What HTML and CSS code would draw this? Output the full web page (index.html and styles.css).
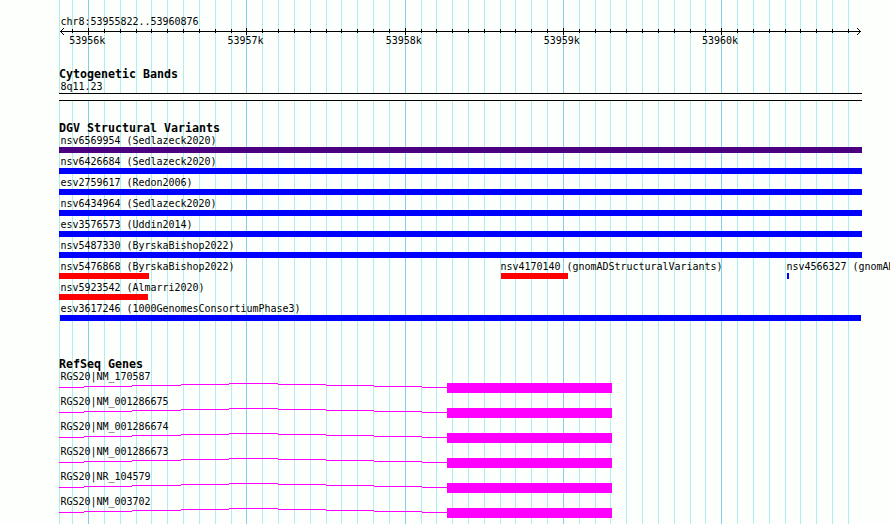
FILE: index.html
```html
<!DOCTYPE html>
<html lang="en">
<head>
    <meta charset="UTF-8">
    <title>chr8:53955822..53960876</title>
    <link rel="stylesheet" href="styles.css">
</head>
<body>
    <svg class="gridlines" id="gridlines" width="890" height="524" shape-rendering="crispEdges"></svg>

    <main class="panel">
        <section class="ruler">
            <p class="label">chr8:53955822..53960876</p>
            <svg class="axis" id="axis" width="803" height="7" shape-rendering="crispEdges">
                <rect x="1" y="3" width="801" height="1"/>
                <path d="M2 2h1v1h-1zM3 1h1v1h-1zM4 0h1v1h-1zM2 4h1v1h-1zM3 5h1v1h-1zM4 6h1v1h-1z"/>
                <path d="M800 2h1v1h-1zM799 1h1v1h-1zM798 0h1v1h-1zM800 4h1v1h-1zM799 5h1v1h-1zM798 6h1v1h-1z"/>
            </svg>
            <div class="scale">
                <span>53956k</span>
                <span>53957k</span>
                <span>53958k</span>
                <span>53959k</span>
                <span>53960k</span>
            </div>
        </section>

        <section class="track cytobands">
            <h2>Cytogenetic Bands</h2>
            <p class="label">8q11.23</p>
            <div class="band"></div>
        </section>

        <section class="track variants">
            <h2>DGV Structural Variants</h2>
            <div class="row"><div class="feature"><p class="label">nsv6569954 (Sedlazeck2020)</p><div class="bar complex"></div></div></div>
            <div class="row"><div class="feature"><p class="label">nsv6426684 (Sedlazeck2020)</p><div class="bar gain"></div></div></div>
            <div class="row"><div class="feature"><p class="label">esv2759617 (Redon2006)</p><div class="bar gain"></div></div></div>
            <div class="row"><div class="feature"><p class="label">nsv6434964 (Sedlazeck2020)</p><div class="bar gain"></div></div></div>
            <div class="row"><div class="feature"><p class="label">esv3576573 (Uddin2014)</p><div class="bar gain"></div></div></div>
            <div class="row"><div class="feature"><p class="label">nsv5487330 (ByrskaBishop2022)</p><div class="bar gain"></div></div></div>
            <div class="row shared">
                <div class="feature"><p class="label">nsv5476868 (ByrskaBishop2022)</p><div class="bar loss" style="width: 90px"></div></div>
                <div class="feature inner"><p class="label">nsv4170140 (gnomADStructuralVariants)</p><div class="bar loss" style="width: 67px"></div></div>
                <div class="feature inner"><p class="label">nsv4566327 (gnomADStructuralVariants)</p><div class="bar gain" style="width: 2px"></div></div>
            </div>
            <div class="row"><div class="feature"><p class="label">nsv5923542 (Almarri2020)</p><div class="bar loss" style="width: 89px"></div></div></div>
            <div class="row"><div class="feature"><p class="label">esv3617246 (1000GenomesConsortiumPhase3)</p><div class="bar gain inset"></div></div></div>
        </section>

        <section class="track genes">
            <h2>RefSeq Genes</h2>
            <div id="genes"></div>
        </section>
    </main>

    <script>
        const genes = [
            "RGS20|NM_170587",
            "RGS20|NM_001286675",
            "RGS20|NM_001286674",
            "RGS20|NM_001286673",
            "RGS20|NR_104579",
            "RGS20|NM_003702",
        ];

        // one line per 100 bp, every tenth one is a major line
        let lines = '<rect class="minor" x="59" y="0" width="1" height="524"/>';
        let ticks = "";
        for (let k = -1; k <= 48; k++) {
            const x = Math.floor(88.6 + k * 15.829);
            const major = k % 10 === 0;
            lines += `<rect class="${major ? "major" : "minor"}" x="${x}" y="0" width="1" height="524"/>`;
            ticks += `<rect x="${x - 59}" y="${major ? 0 : 1}" width="1" height="${major ? 7 : 4}"/>`;
        }
        document.getElementById("gridlines").innerHTML = lines;
        document.getElementById("axis").innerHTML += ticks;

        // intron is a stepped arc, the exon block closes it
        document.getElementById("genes").innerHTML = genes.map(name => `
            <div class="gene">
                <p class="label">${name}</p>
                <svg class="model" width="553" height="10" shape-rendering="crispEdges">
                    <path d="M0 4h25v1h-25zM25 3h48v1h-48zM73 2h49v1h-49zM122 1h48v1h-48zM170 0h49v1h-49zM219 1h48v1h-48zM267 2h48v1h-48zM315 3h48v1h-48zM363 4h25v1h-25z"/>
                    <rect x="388" y="0" width="165" height="10"/>
                </svg>
            </div>
        `).join("");
    </script>
</body>
</html>
```

FILE: styles.css
```css
* {
    margin: 0;
    padding: 0;
    box-sizing: border-box;
}

body {
    background-color: #fcfffc;
    color: #000;
    font-family: "DejaVu Sans Mono", monospace;
    font-size: 10px;
    height: 524px;
    overflow: hidden;
    position: relative;
}

svg {
    display: block;
}

.gridlines {
    position: absolute;
    top: 0;
    left: 0;
}

.minor {
    fill: #afeeee;
}

.major {
    fill: #87ceeb;
}

.panel {
    position: relative;
    height: 524px;
    padding-left: 59px;
    overflow: hidden;
}

.label {
    height: 15px;
    padding-left: 1.5px;
    line-height: 17px;
    letter-spacing: -0.02px;
    white-space: nowrap;
}

.ruler {
    height: 67px;
    padding-top: 13px;
}

.scale {
    display: flex;
    gap: 122.2px;
    padding-left: 10.3px;
    line-height: 11px;
    letter-spacing: -0.02px;
}

.scale span {
    width: 36px;
}

.track h2 {
    height: 11px;
    font-size: 11.63px;
    line-height: 14px;
    font-weight: bold;
    white-space: nowrap;
}

.cytobands {
    height: 54px;
}

.band {
    width: 803px;
    height: 8px;
    background: #fcfffc;
    border-top: 1px solid #000;
    border-bottom: 1px solid #000;
}

.variants {
    height: 236px;
}

.row {
    height: 21px;
}

.row.shared {
    display: grid;
    grid-template-columns: 442px 286px auto;
}

.feature {
    min-width: 0;
}

.bar {
    width: 803px;
    height: 6px;
}

.feature.inner .label {
    padding-left: 0;
    margin-left: -0.5px;
}

.bar.inset {
    width: 801px;
    margin-left: 1px;
}

.complex {
    background: #4b0082;
}

.gain {
    background: #00f;
}

.loss {
    background: #f00;
}

.gene {
    height: 25px;
}

.model {
    fill: #f0f;
}
```
